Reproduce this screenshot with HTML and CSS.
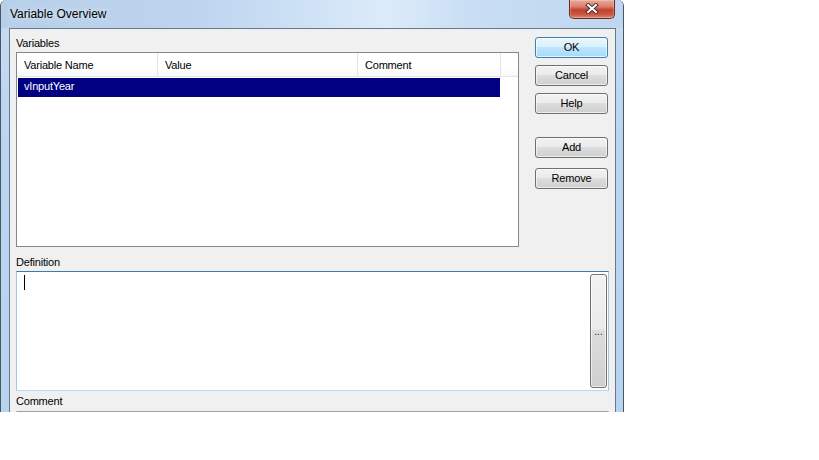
FILE: index.html
```html
<!DOCTYPE html>
<html>
<head>
<meta charset="utf-8">
<link rel="stylesheet" href="styles.css">
</head>
<body>
<div class="window">
  <div class="titlebar">
    <span class="title">Variable Overview</span>
    <div class="close">
      <svg width="14" height="11" viewBox="0 0 14 11">
        <path d="M3 2 L11 9 M11 2 L3 9" stroke="#4a3030" stroke-width="4" stroke-linecap="square" fill="none"/>
        <path d="M3 2 L11 9 M11 2 L3 9" stroke="#ffffff" stroke-width="2" stroke-linecap="square" fill="none"/>
      </svg>
    </div>
  </div>
  <div class="client">
    <div class="top">
      <div class="left">
        <div class="label">Variables</div>
        <div class="list">
          <div class="header">
            <div class="hcell c1">Variable Name</div>
            <div class="hcell c2">Value</div>
            <div class="hcell c3">Comment</div>
            <div class="hcell filler"></div>
          </div>
          <div class="rows">
            <div class="row selected">vInputYear</div>
          </div>
        </div>
      </div>
      <div class="buttons">
        <button class="btn default">OK</button>
        <button class="btn">Cancel</button>
        <button class="btn help">Help</button>
        <button class="btn add">Add</button>
        <button class="btn">Remove</button>
      </div>
    </div>
    <div class="label def-label">Definition</div>
    <div class="textbox focused">
      <div class="editor"><span class="caret"></span></div>
      <div class="ellipsis">...</div>
    </div>
    <div class="label comment-label">Comment</div>
    <div class="textbox comment"></div>
  </div>
</div>
</body>
</html>
```

FILE: styles.css
```css
html, body {
  margin: 0;
  padding: 0;
  background: #ffffff;
}

body {
  font-family: "Liberation Sans", Arial, sans-serif;
  font-size: 11px;
  letter-spacing: -0.2px;
  color: #000;
}

.window {
  width: 624px;
  height: 412px;
  box-sizing: border-box;
  border-left: 1px solid #4a5664;
  border-right: 1px solid #4a5664;
  border-radius: 6px 6px 0 0;
  overflow: hidden;
  display: flex;
  flex-direction: column;
  padding: 0 7px 0 8px;
  background: linear-gradient(180deg, #c6dcf2 0%, #bcd6f1 30%, #b6d3f0 100%);
}

.titlebar {
  height: 28px;
  flex: none;
  display: flex;
  align-items: flex-start;
  margin: 0 -7px 0 -8px;
  padding: 0 8px 0 9px;
  background: linear-gradient(90deg, #b7cfe9 0%, #bcd4ee 30%, #cfe2f6 50%, #dcebf9 62%, #c9def4 75%, #bed6ef 100%);
}

.title {
  font-family: "Liberation Sans", Arial, sans-serif;
  font-size: 12px;
  letter-spacing: 0;
  line-height: 16px;
  margin-top: 6px;
  color: #000;
  text-shadow: 0 0 6px rgba(255,255,255,0.9);
}

.close {
  margin-left: auto;
  width: 46px;
  height: 19px;
  box-sizing: border-box;
  border: 1px solid #6b2a20;
  border-top: none;
  border-radius: 0 0 5px 5px;
  background: linear-gradient(180deg, #e9a997 0%, #d9836f 35%, #c4412c 55%, #cc5540 80%, #dc8a74 100%);
  display: flex;
  align-items: center;
  justify-content: center;
  box-shadow: inset 0 0 0 1px rgba(255,255,255,0.25);
}

.close svg {
  display: block;
  margin-top: -1px;
}

.client {
  flex: 1;
  min-height: 0;
  border: 1px solid #66788a;
  border-bottom: none;
  background: #f0f0f0;
  padding: 7px 6px 0 6px;
  overflow: hidden;
}

.top {
  display: grid;
  grid-template-columns: 503px 73px;
  column-gap: 16px;
}

.label {
  height: 14px;
  line-height: 14px;
  white-space: nowrap;
}

.list {
  margin-top: 2px;
  height: 195px;
  box-sizing: border-box;
  border: 1px solid #828790;
  background: #ffffff;
  display: flex;
  flex-direction: column;
}

.header {
  display: flex;
  height: 24px;
  box-sizing: border-box;
  border-bottom: 1px solid #e5e5e5;
  background: linear-gradient(180deg, #ffffff 0%, #ffffff 60%, #f7f8f9 100%);
}

.hcell {
  box-sizing: border-box;
  border-right: 1px solid #e3e5e8;
  padding: 2px 0 0 7px;
  line-height: 21px;
  white-space: nowrap;
}

.c1 { width: 141px; }
.c2 { width: 200px; }
.c3 { width: 143px; }
.filler { flex: 1; border-right: none; }

.rows {
  padding: 1px 0 0 1px;
}

.row {
  width: 482px;
  height: 19px;
  line-height: 17px;
  padding-left: 6px;
  box-sizing: border-box;
}

.row.selected {
  background: #000080;
  color: #ffffff;
}

.buttons {
  display: flex;
  flex-direction: column;
  padding-top: 1px;
}

.btn {
  width: 73px;
  height: 21px;
  margin: 0 0 7px 0;
  padding: 0 0 2px 0;
  box-sizing: border-box;
  font-family: "Liberation Sans", Arial, sans-serif;
  font-size: 11px;
  letter-spacing: -0.2px;
  color: #000;
  border: 1px solid #707070;
  border-radius: 3px;
  background: linear-gradient(180deg, #f2f2f2 0%, #ebebeb 48%, #dddddd 50%, #cfcfcf 100%);
  box-shadow: inset 0 0 0 1px rgba(255,255,255,0.6);
}

.btn.default {
  border-color: #3c7fb1;
  background: linear-gradient(180deg, #eaf6fd 0%, #d9f0fc 48%, #bee6fd 50%, #a7d9f5 100%);
  box-shadow: inset 0 0 0 1px rgba(255,255,255,0.7);
}

.btn.help { margin-bottom: 23px; }
.btn.add { margin-bottom: 10px; }

.def-label {
  margin-top: 8px;
}

.textbox {
  box-sizing: border-box;
  background: #ffffff;
  margin-top: 2px;
}

.textbox.focused {
  height: 120px;
  border: 1px solid #a4c9e3;
  border-top-color: #3d7bad;
  border-bottom-color: #b7d9ed;
  display: flex;
}

.editor {
  flex: 1;
  padding: 3px 0 0 7px;
}

.caret {
  display: block;
  width: 1px;
  height: 15px;
  background: #000;
}

.ellipsis {
  width: 17px;
  margin: 2px 1px 2px 0;
  box-sizing: border-box;
  border: 1px solid #707070;
  border-radius: 3px;
  background: linear-gradient(180deg, #f2f2f2 0%, #ebebeb 48%, #dddddd 50%, #cfcfcf 100%);
  display: flex;
  align-items: center;
  justify-content: center;
  font-size: 10px;
  letter-spacing: 0;
  line-height: 10px;
  padding-top: 2px;
  color: #1a1a5a;
  box-shadow: inset 0 0 0 1px rgba(255,255,255,0.6);
}

.comment-label {
  margin-top: 3px;
}

.textbox.comment {
  margin-top: 3px;
  height: 40px;
  border: 1px solid #e2e3ea;
  border-top-color: #a0a0a0;
}
```
